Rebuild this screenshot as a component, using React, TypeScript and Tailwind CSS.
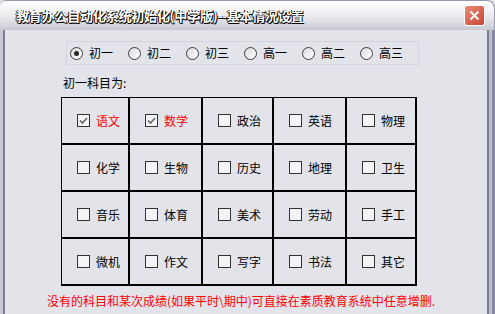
const grades = ["初一", "初二", "初三", "高一", "高二", "高三"];

const subjects = [
  ["语文", "数学", "政治", "英语", "物理"],
  ["化学", "生物", "历史", "地理", "卫生"],
  ["音乐", "体育", "美术", "劳动", "手工"],
  ["微机", "作文", "写字", "书法", "其它"],
];

const checked = ["语文", "数学"];

function Radio({ on }: { on?: boolean }) {
  return (
    <span className="flex h-[13px] w-[13px] items-center justify-center rounded-full border border-[#3c3c3c] bg-gradient-to-br from-[#dcdce2] to-white">
      {on && <span className="h-[5px] w-[5px] rounded-full bg-[#2a2a2a]" />}
    </span>
  );
}

function Check({ on }: { on?: boolean }) {
  return (
    <span className="flex h-[13px] w-[13px] items-center justify-center border border-[#333] bg-[#f4f4f6]">
      {on && (
        <svg width="9" height="9" viewBox="0 0 9 9">
          <path d="M1 4.5 L3.5 7 L8 2" fill="none" stroke="#666" strokeWidth="1.6" />
        </svg>
      )}
    </span>
  );
}

export default function App() {
  return (
    <div
      className="flex h-[314px] w-[495px] flex-col overflow-hidden bg-[#e3e4ea] text-[12px] text-black"
      style={{ fontFamily: '"Noto Sans CJK SC", "Noto Sans", sans-serif' }}
    >
      {/* title bar */}
      <div className="flex h-[30px] shrink-0 items-center justify-between rounded-tr-[8px] rounded-tl-[6px] border-t border-r border-[#9a9aae] bg-gradient-to-b from-white via-[#ececf0] to-[#c9c9d4] pl-[16px] pr-[9px]">
        <span
          className="text-[13px] font-bold tracking-[-0.2px] text-white"
          style={{ textShadow: "1px 1px 0 #000, -1px 0 0 #000, 0 1px 0 #000" }}
        >
          教育办公自动化系统初始化(中学版)--基本情况设置
        </span>
        <button className="flex h-[21px] w-[21px] items-center justify-center rounded-[3px] border border-white bg-gradient-to-br from-[#e98a78] to-[#c8432e]">
          <svg width="11" height="11" viewBox="0 0 11 11">
            <path d="M1.5 1.5 L9.5 9.5 M9.5 1.5 L1.5 9.5" stroke="white" strokeWidth="2" />
          </svg>
        </button>
      </div>

      {/* body */}
      <div className="flex min-h-0 flex-1">
        <div className="w-[3px] bg-[#c9c9d4]" />
        <div className="w-[2px] bg-[#7c7c95]" />
        <div className="w-[2px] bg-[#e8e8ee]" />
        <div className="flex flex-1 flex-col pl-[54px] pt-[11px]">
          <div className="ml-[5px] flex h-[24px] w-[353px] items-center border border-[#d4d5dc] pl-[3px]">
            {grades.map((g, i) => (
              <label key={g} className="flex w-[60px] items-center gap-[6px]">
                <Radio on={i === 0} />
                <span className="leading-none">{g}</span>
              </label>
            ))}
          </div>

          <div className="mt-[10px] ml-[2px] leading-[16px]">初一科目为:</div>

          <div className="mt-[6px] grid w-[356px] grid-cols-[68px_73px_71px_73px_70px] border-l border-t border-black">
            {subjects.flat().map((s) => {
              const on = checked.includes(s);
              return (
                <div
                  key={s}
                  className="flex h-[47px] items-center gap-[6px] border-b-2 border-r-2 border-black pl-[15px]"
                >
                  <Check on={on} />
                  <span className={on ? "text-[#ff0000]" : ""}>{s}</span>
                </div>
              );
            })}
          </div>

          <div className="mt-[7px] -ml-[14px] text-[#ff0000] leading-[16px]">
            没有的科目和某次成绩(如果平时\期中)可直接在素质教育系统中任意增删.
          </div>
        </div>
        <div className="w-[2px] bg-[#7c7c95]" />
        <div className="w-[3px] bg-[#bcbccb]" />
        <div className="w-[3px] bg-[#8a8aa2]" />
      </div>
    </div>
  );
}
